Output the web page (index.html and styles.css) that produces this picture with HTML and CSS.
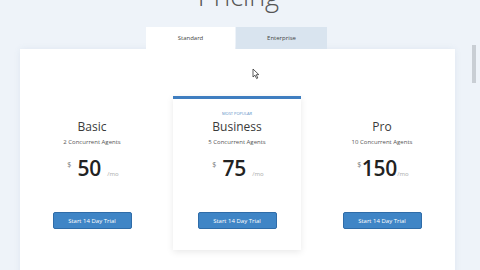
FILE: index.html
```html
<!DOCTYPE html>
<html lang="en">
<head>
  <meta charset="UTF-8" />
  <title>Pricing</title>
  <link rel="stylesheet" href="styles.css">
</head>
<body>
  <header class="page-head">
    <h1>Pricing</h1>
  </header>

  <nav class="tabs">
    <button class="tab active">Standard</button>
    <button class="tab">Enterprise</button>
  </nav>

  <section class="pricing-card">
    <div class="plans">
      <div class="plan">
        <div class="badge">Most Popular</div>
        <h2>Basic</h2>
        <p class="agents">2 Concurrent Agents</p>
        <div class="price"><span class="cur">$</span><span class="amount">50</span><span class="per">/mo</span></div>
        <button class="trial">Start 14 Day Trial</button>
      </div>

      <div class="plan featured">
        <div class="badge">Most Popular</div>
        <h2>Business</h2>
        <p class="agents">5 Concurrent Agents</p>
        <div class="price"><span class="cur">$</span><span class="amount">75</span><span class="per">/mo</span></div>
        <button class="trial">Start 14 Day Trial</button>
      </div>

      <div class="plan">
        <div class="badge">Most Popular</div>
        <h2>Pro</h2>
        <p class="agents">10 Concurrent Agents</p>
        <div class="price"><span class="cur">$</span><span class="amount">150</span><span class="per">/mo</span></div>
        <button class="trial">Start 14 Day Trial</button>
      </div>
    </div>
  </section>

  <div class="scroll-thumb"></div>

  <svg class="cursor" width="8" height="12" viewBox="0 0 8 12">
    <path d="M1 1 L1 9 L3 7.2 L4.6 10.6 L5.8 10 L4.3 6.7 L6.8 6.6 Z" fill="#fff" stroke="#333" stroke-width="0.8" stroke-linejoin="round" />
  </svg>
</body>
</html>
```

FILE: styles.css
```css
body {
  font-family: 'Open Sans', 'Liberation Sans', sans-serif;
  background-color: #eef3f9;
  color: #333;
  margin: 0;
  height: 270px;
  overflow: hidden;
  position: relative;
}
.page-head {
  height: 27px;
  text-align: center;
  padding-right: 3px;
}
h1 {
  margin: 0;
  font-size: 27px;
  font-weight: 300;
  line-height: 27px;
  color: #555;
  transform: translateY(-18px);
}
.tabs {
  display: flex;
  justify-content: center;
  padding-right: 7px;
}
.tab {
  width: 91px;
  height: 22px;
  border: none;
  margin: 0;
  padding: 0;
  font-family: inherit;
  font-size: 6px;
  color: #444;
  background-color: #d9e4ef;
}
.tab.active {
  width: 89px;
  background-color: #fff;
  margin-right: 1px;
}
.pricing-card {
  margin: 0 25px 0 20px;
  height: 230px;
  background-color: #fff;
  box-shadow: 0 0 6px rgba(120, 150, 180, 0.12);
}
.plans {
  display: grid;
  grid-template-columns: repeat(3, 1fr);
  padding-top: 47px;
}
.plan {
  margin: 0 9px 0 8px;
  padding-bottom: 21px;
  border-top: 3px solid transparent;
  text-align: center;
}
.plan.featured {
  border-top-color: #3f7ec0;
  box-shadow: 0 2px 7px rgba(0, 0, 0, 0.09);
}
.badge {
  margin-top: 12px;
  font-size: 4px;
  line-height: 6px;
  text-transform: uppercase;
  color: #5b8fc7;
  visibility: hidden;
}
.featured .badge {
  visibility: visible;
}
h2 {
  margin: 3px 0 0;
  font-size: 12px;
  font-weight: 400;
  line-height: 14px;
  color: #3a3a3a;
}
.agents {
  margin: 4px 0 0;
  font-size: 6px;
  line-height: 8px;
  color: #555;
}
.price {
  display: flex;
  justify-content: center;
  align-items: baseline;
  margin-top: 11px;
  height: 22px;
  padding-left: 2px;
}
.cur {
  font-size: 7px;
  color: #777;
  align-self: flex-start;
  margin-top: 3px;
}
.amount {
  min-width: 36px;
  font-size: 21px;
  font-weight: 600;
  line-height: 22px;
  color: #222;
  letter-spacing: -0.3px;
}
.per {
  font-size: 6px;
  color: #aaa;
}
.trial {
  display: block;
  margin: 33px auto 0;
  width: 79px;
  height: 17px;
  padding: 0;
  border: 1px solid #2f6ca8;
  border-radius: 2px;
  background-color: #3f85c6;
  color: #fff;
  font-family: inherit;
  font-size: 6px;
}
.scroll-thumb {
  position: absolute;
  right: 4px;
  top: 45px;
  width: 4px;
  height: 38px;
  background-color: #c9ced4;
}
.cursor {
  position: absolute;
  left: 252px;
  top: 68px;
}
```
